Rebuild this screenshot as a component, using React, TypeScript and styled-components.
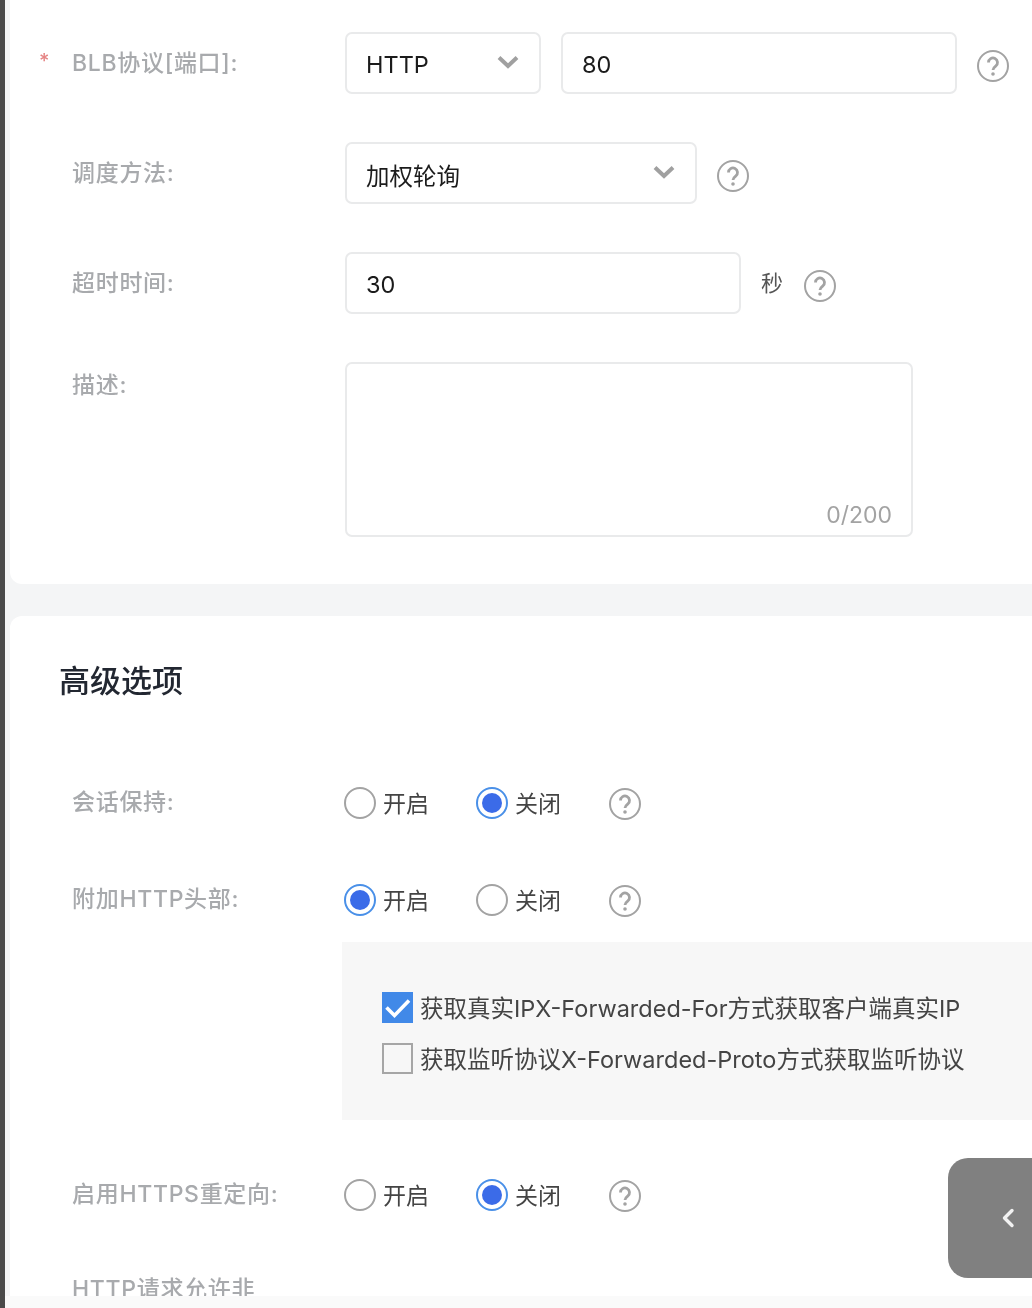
import React from 'react';
import styled, { createGlobalStyle } from 'styled-components';

const FONT = `Inter, "Noto Sans CJK SC", sans-serif`;

const GlobalStyle = createGlobalStyle`
    html,
    body {
        margin: 0;
        padding: 0;
        background: #fff;
    }

    * {
        box-sizing: border-box;
    }
`;

const HelpIcon = () => (
    <HelpSvg viewBox="0 0 32 32" fill="none">
        <circle cx="16" cy="16" r="15" stroke="#a3a3a3" strokeWidth="2" />
        <path
            d="M11.5 12.5a4.5 4.5 0 1 1 7.2 3.6c-1.6 1.2-2.7 2-2.7 4"
            stroke="#a3a3a3"
            strokeWidth="2.8"
        />
        <circle cx="16" cy="24" r="1.8" fill="#a3a3a3" />
    </HelpSvg>
);

const Chevron = () => (
    <ChevronSvg viewBox="0 0 22 14" fill="none">
        <path d="M2 2.5l9 8.5 9-8.5" stroke="#a0a0a0" strokeWidth="4" />
    </ChevronSvg>
);

const RadioRow = ({
    label,
    on,
}: {
    label: string;
    on: boolean;
}) => (
    <Row>
        <RadioLabel>{label}</RadioLabel>
        <RadioGroup>
            <Option>
                <Radio checked={on} />
                <OptionText>开启</OptionText>
            </Option>
            <Option>
                <Radio checked={!on} />
                <OptionText>关闭</OptionText>
            </Option>
            <HelpIcon />
        </RadioGroup>
    </Row>
);

export default function App() {
    return (
        <Page>
            <GlobalStyle />
            <TopCard>
                <FieldRow>
                    <FieldLabel required>BLB协议[端口]:</FieldLabel>
                    <Select width={196}>
                        HTTP
                        <Chevron />
                    </Select>
                    <Input width={396} spaced>
                        80
                    </Input>
                    <HelpIcon />
                </FieldRow>
                <FieldRow>
                    <FieldLabel>调度方法:</FieldLabel>
                    <Select width={352}>
                        加权轮询
                        <Chevron />
                    </Select>
                    <HelpIcon />
                </FieldRow>
                <FieldRow>
                    <FieldLabel>超时时间:</FieldLabel>
                    <Input width={396}>30</Input>
                    <Unit>秒</Unit>
                    <HelpIcon />
                </FieldRow>
                <Row>
                    <FieldLabel short>描述:</FieldLabel>
                    <TextArea>
                        <Counter>0/200</Counter>
                    </TextArea>
                </Row>
            </TopCard>
            <BottomCard>
                <Title>高级选项</Title>
                <RadioRow label="会话保持:" on={false} />
                <RadioRow label="附加HTTP头部:" on />
                <HeaderPanel>
                    <CheckRow>
                        <CheckBox checked>
                            <svg width="31" height="31" viewBox="0 0 31 31" fill="none">
                                <path
                                    d="M4.5 15.5l8 8L27 8.5"
                                    stroke="#fff"
                                    strokeWidth="3.6"
                                />
                            </svg>
                        </CheckBox>
                        <CheckText>获取真实IPX-Forwarded-For方式获取客户端真实IP</CheckText>
                    </CheckRow>
                    <CheckRow>
                        <CheckBox />
                        <CheckText>获取监听协议X-Forwarded-Proto方式获取监听协议</CheckText>
                    </CheckRow>
                </HeaderPanel>
                <RadioRow label="启用HTTPS重定向:" on={false} />
                <LastLabel>HTTP请求允许非</LastLabel>
            </BottomCard>
            <CollapseButton>
                <svg width="14" height="20" viewBox="0 0 14 20" fill="none">
                    <path
                        d="M11 2.5L3.5 10l7.5 7.5"
                        stroke="#f2f2f2"
                        strokeWidth="3.4"
                        strokeLinecap="round"
                        strokeLinejoin="round"
                    />
                </svg>
            </CollapseButton>
            <FootStrip />
        </Page>
    );
}

const Page = styled.div`
    position: relative;
    width: 1032px;
    height: 1308px;
    overflow: hidden;
    padding-left: 5px;
    border-left: 5px solid #4a4a4a;
    background-color: #f4f5f6;
    font-family: ${FONT};
    filter: blur(0.35px);
`;

const Card = styled.div`
    background-color: #fff;
    margin-right: -20px;
`;

const TopCard = styled(Card)`
    height: 584px;
    padding-top: 32px;
    border-bottom-left-radius: 12px;
`;

const BottomCard = styled(Card)`
    margin-top: 32px;
    padding-top: 45px;
    padding-bottom: 40px;
    border-top-left-radius: 12px;
`;

const Row = styled.div`
    display: flex;
    align-items: flex-start;
    padding-left: 62px;
    margin-bottom: 65px;
`;

const FieldRow = styled(Row)`
    align-items: center;
    margin-bottom: 48px;
`;

const FieldLabel = styled.div<{ required?: boolean; short?: boolean }>`
    position: relative;
    flex: none;
    width: 273px;
    font-size: 23px;
    font-weight: 500;
    letter-spacing: 0.7px;
    line-height: ${(props) => (props.short ? '46px' : '62px')};
    color: #a8aaad;
    margin-top: ${(props) => (props.short ? '0' : '-1px')};

    &::before {
        content: ${(props) => (props.required ? "'*'" : 'none')};
        position: absolute;
        left: -33px;
        top: -2px;
        font-size: 20px;
        color: #e58484;
    }
`;

const RadioLabel = styled.div`
    flex: none;
    width: 273px;
    margin-top: 1px;
    font-size: 23px;
    font-weight: 500;
    letter-spacing: 0.7px;
    line-height: 30px;
    color: #a8aaad;
`;

const LastLabel = styled(RadioLabel)`
    margin-top: -1px;
    margin-left: 62px;
    white-space: nowrap;
`;

const Field = styled.div<{ width: number }>`
    display: flex;
    align-items: center;
    justify-content: space-between;
    flex: none;
    width: ${(props) => props.width}px;
    height: 62px;
    padding: 3px 20px 0 19px;
    border: 2px solid #e9eaeb;
    border-radius: 7px;
    font-size: 23.5px;
    color: #1b1b1b;
    background-color: #fff;
`;

const Select = styled(Field)``;

const Input = styled(Field)<{ spaced?: boolean }>`
    margin-left: ${(props) => (props.spaced ? '20px' : '0')};
`;

const HelpSvg = styled.svg`
    flex: none;
    width: 32px;
    height: 32px;
    margin-left: 20px;
    margin-top: 6px;
`;

const ChevronSvg = styled.svg`
    width: 22px;
    height: 14px;
    margin-top: -6px;
`;

const Unit = styled.div`
    margin-left: 20px;
    margin-right: 1px;
    margin-top: -4px;
    font-size: 22px;
    color: #555;
`;

const TextArea = styled.div`
    position: relative;
    flex: none;
    width: 568px;
    height: 175px;
    border: 2px solid #e9eaeb;
    border-radius: 7px;
`;

const Counter = styled.div`
    position: absolute;
    right: 19px;
    bottom: 6px;
    font-size: 23px;
    color: #a3a3a3;
`;

const Title = styled.div`
    margin-left: 49px;
    margin-bottom: 85px;
    font-size: 31px;
    font-weight: 500;
    line-height: 40px;
    color: #222731;
`;

const RadioGroup = styled.div`
    display: grid;
    grid-template-columns: 132px 133px 32px;
    align-items: center;
    height: 32px;
    margin-left: -1px;

    ${HelpSvg} {
        margin: 2px 0 0;
    }
`;

const Option = styled.div`
    display: flex;
    align-items: center;
    gap: 7px;
`;

const Radio = styled.span<{ checked: boolean }>`
    display: flex;
    align-items: center;
    justify-content: center;
    width: 32px;
    height: 32px;
    border: 2px solid ${(props) => (props.checked ? '#4a90e8' : '#a3a3a3')};
    border-radius: 50%;

    &::after {
        content: '';
        display: ${(props) => (props.checked ? 'block' : 'none')};
        width: 20px;
        height: 20px;
        border-radius: 50%;
        background-color: #3b6be8;
    }
`;

const OptionText = styled.span`
    margin-top: 2px;
    font-size: 23px;
    line-height: 32px;
    color: #444;
`;

const HeaderPanel = styled.div`
    margin-left: 332px;
    margin-top: -38px;
    margin-bottom: 58px;
    padding: 50px 40px 46px;
    background-color: #f7f7f7;
`;

const CheckRow = styled.div`
    display: flex;
    align-items: center;
    gap: 7px;
    height: 31px;

    & + & {
        margin-top: 20px;
    }
`;

const CheckBox = styled.span<{ checked?: boolean }>`
    flex: none;
    width: 31px;
    height: 31px;
    border: ${(props) => (props.checked ? 'none' : '2px solid #a6a6a6')};
    background-color: ${(props) => (props.checked ? '#4189e8' : 'transparent')};
`;

const CheckText = styled.span`
    font-size: 23.5px;
    margin-top: -2px;
    white-space: nowrap;
    color: #444;
`;

const CollapseButton = styled.div`
    position: absolute;
    left: 943px;
    top: 1158px;
    display: flex;
    align-items: center;
    justify-content: flex-end;
    width: 104px;
    height: 120px;
    padding-right: 37px;
    border-radius: 20px;
    background-color: #808080;
`;

const FootStrip = styled.div`
    position: absolute;
    left: -5px;
    right: 0;
    bottom: 0;
    height: 12px;
    background-color: #fafafa;
`;
